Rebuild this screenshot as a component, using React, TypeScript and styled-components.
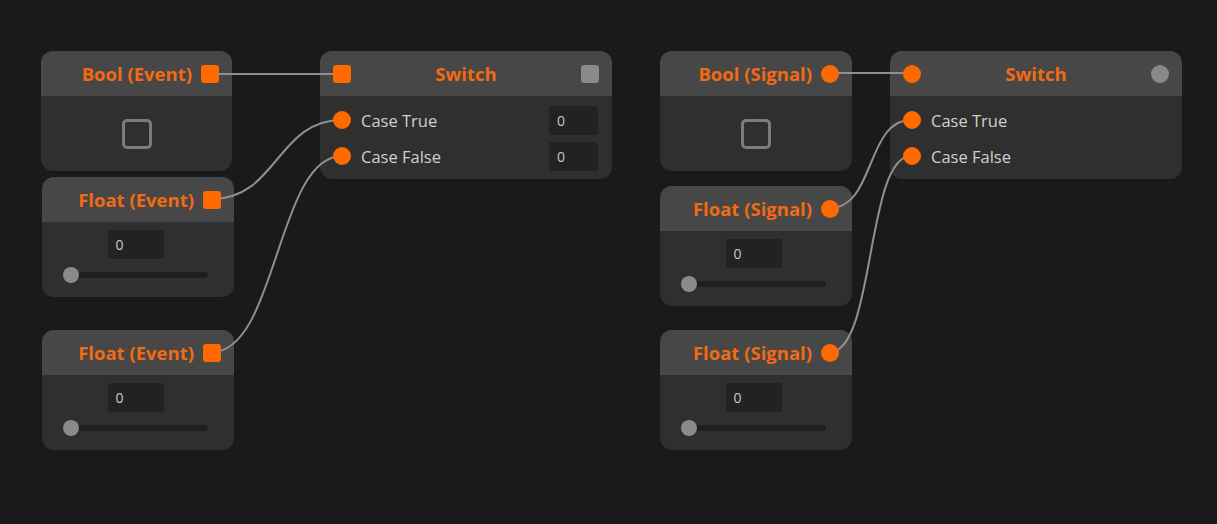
import React from "react";
import styled, { createGlobalStyle, css } from "styled-components";

const Global = createGlobalStyle`
  html, body { margin: 0; padding: 0; background: #1a1a1a; }
  body { font-family: "Open Sans", "Noto Sans", sans-serif; }
`;

const ORANGE = "#ff6a00";

type PortKind = "square" | "circle";

const Canvas = styled.div`
  position: relative;
  width: 1217px;
  height: 524px;
  background: #1a1a1a;
  overflow: hidden;
`;

const Wires = styled.svg`
  position: absolute;
  inset: 0;
  width: 100%;
  height: 100%;
  pointer-events: none;
  z-index: 1;
`;

const NodeBox = styled.div<{ $w: number }>`
  position: absolute;
  width: ${(p) => p.$w}px;
  border-radius: 12px;
  overflow: hidden;
  background: #2f2f2f;
  display: flex;
  flex-direction: column;
`;

const Header = styled.div<{ $align: "end" | "between" }>`
  height: 45px;
  background: #474747;
  display: flex;
  align-items: center;
  padding: 0 13px;
  gap: 9px;
  justify-content: ${(p) => (p.$align === "end" ? "flex-end" : "space-between")};
`;

const Title = styled.span<{ $center?: boolean }>`
  font-family: "Open Sans", sans-serif;
  font-weight: 700;
  font-size: 18.5px;
  color: #f26b12;
  ${(p) =>
    p.$center &&
    css`
      flex: 1;
      text-align: center;
    `}
`;

const Port = styled.span<{ $kind: PortKind; $color?: string }>`
  position: relative;
  z-index: 2;
  flex: none;
  width: 18px;
  height: 18px;
  background: ${(p) => p.$color ?? ORANGE};
  border-radius: ${(p) => (p.$kind === "circle" ? "50%" : "3px")};
`;

const CheckBody = styled.div`
  height: 75px;
  display: flex;
  align-items: center;
  justify-content: center;
`;

const CheckBox = styled.span`
  width: 24px;
  height: 24px;
  border: 3px solid #7c7c7c;
  border-radius: 5px;
`;

const FloatBody = styled.div`
  height: 75px;
  box-sizing: border-box;
  padding: 8px 26px 0 21px;
  display: flex;
  flex-direction: column;
  align-items: center;
  gap: 8px;
`;

const NumBox = styled.div<{ $w: number }>`
  width: ${(p) => p.$w}px;
  height: 29px;
  box-sizing: border-box;
  background: #222222;
  border-radius: 3px;
  color: #c9c9c9;
  font-family: "Open Sans", sans-serif;
  font-size: 14px;
  display: flex;
  align-items: center;
  padding-left: 8px;
`;

const Slider = styled.div`
  align-self: stretch;
  height: 16px;
  display: flex;
  align-items: center;
  position: relative;
`;

const Track = styled.div`
  flex: 1;
  height: 6px;
  border-radius: 3px;
  background: #1f1f1f;
`;

const Thumb = styled.span`
  position: absolute;
  left: 0;
  top: 0;
  width: 16px;
  height: 16px;
  border-radius: 50%;
  background: #8a8a8a;
`;

const SwitchBody = styled.div`
  height: 83px;
  box-sizing: border-box;
  padding: 6px 14px 5px 13px;
  display: flex;
  flex-direction: column;
`;

const Row = styled.div`
  height: 36px;
  display: flex;
  align-items: center;
  gap: 10px;
`;

const Label = styled.span`
  flex: 1;
  font-family: "Open Sans", sans-serif;
  font-size: 16.5px;
  color: #cfcfcf;
`;

type NodeDef =
  | { id: string; type: "bool"; title: string; x: number; y: number; w: number; port: PortKind }
  | { id: string; type: "float"; title: string; x: number; y: number; w: number; port: PortKind }
  | { id: string; type: "switch"; x: number; y: number; w: number; port: PortKind; inputs: boolean };

const nodes: NodeDef[] = [
  { id: "be", type: "bool", title: "Bool (Event)", x: 41, y: 51, w: 191, port: "square" },
  { id: "fe1", type: "float", title: "Float (Event)", x: 42, y: 177, w: 192, port: "square" },
  { id: "fe2", type: "float", title: "Float (Event)", x: 42, y: 330, w: 192, port: "square" },
  { id: "se", type: "switch", x: 320, y: 51, w: 292, port: "square", inputs: true },
  { id: "bs", type: "bool", title: "Bool (Signal)", x: 660, y: 51, w: 192, port: "circle" },
  { id: "fs1", type: "float", title: "Float (Signal)", x: 660, y: 186, w: 192, port: "circle" },
  { id: "fs2", type: "float", title: "Float (Signal)", x: 660, y: 330, w: 192, port: "circle" },
  { id: "ss", type: "switch", x: 890, y: 51, w: 292, port: "circle", inputs: false },
];

const wires: [number, number, number, number][] = [
  [210, 74, 342, 74],
  [212, 199, 342, 120],
  [212, 352, 342, 156],
  [830, 73, 911, 73],
  [830, 208, 911, 120],
  [830, 352, 911, 156],
];

function wirePath([x1, y1, x2, y2]: [number, number, number, number]) {
  if (y1 === y2) return `M${x1} ${y1} L${x2} ${y2}`;
  const d = Math.max((x2 - x1) / 2, 45);
  return `M${x1} ${y1} C${x1 + d} ${y1}, ${x2 - d} ${y2}, ${x2} ${y2}`;
}

function Node({ n }: { n: NodeDef }) {
  const pos = { left: n.x, top: n.y };
  if (n.type === "switch") {
    return (
      <NodeBox $w={n.w} style={pos}>
        <Header $align="between">
          <Port $kind={n.port} />
          <Title $center>Switch</Title>
          <Port $kind={n.port} $color="#8a8a8a" />
        </Header>
        <SwitchBody>
          {["Case True", "Case False"].map((l) => (
            <Row key={l}>
              <Port $kind="circle" />
              <Label>{l}</Label>
              {n.inputs && <NumBox $w={49}>0</NumBox>}
            </Row>
          ))}
        </SwitchBody>
      </NodeBox>
    );
  }
  return (
    <NodeBox $w={n.w} style={pos}>
      <Header $align="end">
        <Title>{n.title}</Title>
        <Port $kind={n.port} />
      </Header>
      {n.type === "bool" ? (
        <CheckBody>
          <CheckBox />
        </CheckBody>
      ) : (
        <FloatBody>
          <NumBox $w={56}>0</NumBox>
          <Slider>
            <Track />
            <Thumb />
          </Slider>
        </FloatBody>
      )}
    </NodeBox>
  );
}

export default function App() {
  return (
    <>
      <Global />
      <Canvas>
        {nodes.map((n) => (
          <Node key={n.id} n={n} />
        ))}
        <Wires viewBox="0 0 1217 524">
          {wires.map((w, i) => (
            <path key={i} d={wirePath(w)} stroke="#909090" strokeWidth={2} fill="none" />
          ))}
        </Wires>
      </Canvas>
    </>
  );
}
